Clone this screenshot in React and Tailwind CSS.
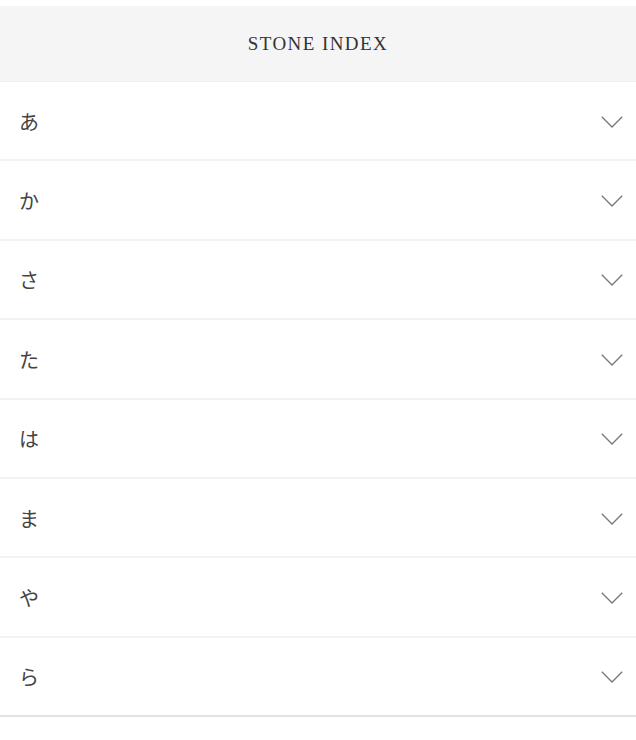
import React from "react";

const kana = ["あ", "か", "さ", "た", "は", "ま", "や", "ら"];

function Chevron() {
  return (
    <svg width="22" height="12" viewBox="0 0 22 12" fill="none" className="shrink-0">
      <path d="M0.8 0.8 L11 11 L21.2 0.8" stroke="#777" strokeWidth="1.3" />
    </svg>
  );
}

export default function App() {
  return (
    <div className="w-[636px] h-[740px] bg-white pt-[6px]">
      <div className="h-[76px] pt-[2px] bg-[#f5f5f5] flex items-center justify-center border-b border-[#efefef]">
        <span
          className="text-[19px] tracking-[0.075em] text-[#333]"
          style={{ fontFamily: '"Liberation Serif", "DejaVu Serif", serif' }}
        >
          STONE INDEX
        </span>
      </div>
      {kana.map((k, i) => (
        <div
          key={k}
          className={`h-[79.4px] flex items-center justify-between pl-[19px] pr-[13px] pt-[2px] border-b-2 ${
            i === kana.length - 1 ? "border-[#e2e2e2]" : "border-[#f2f2f2]"
          }`}
        >
          <span
            className="text-[20px] text-[#444]"
            style={{ fontFamily: '"Noto Sans CJK JP", sans-serif', fontWeight: 400 }}
          >
            {k}
          </span>
          <Chevron />
        </div>
      ))}
    </div>
  );
}
